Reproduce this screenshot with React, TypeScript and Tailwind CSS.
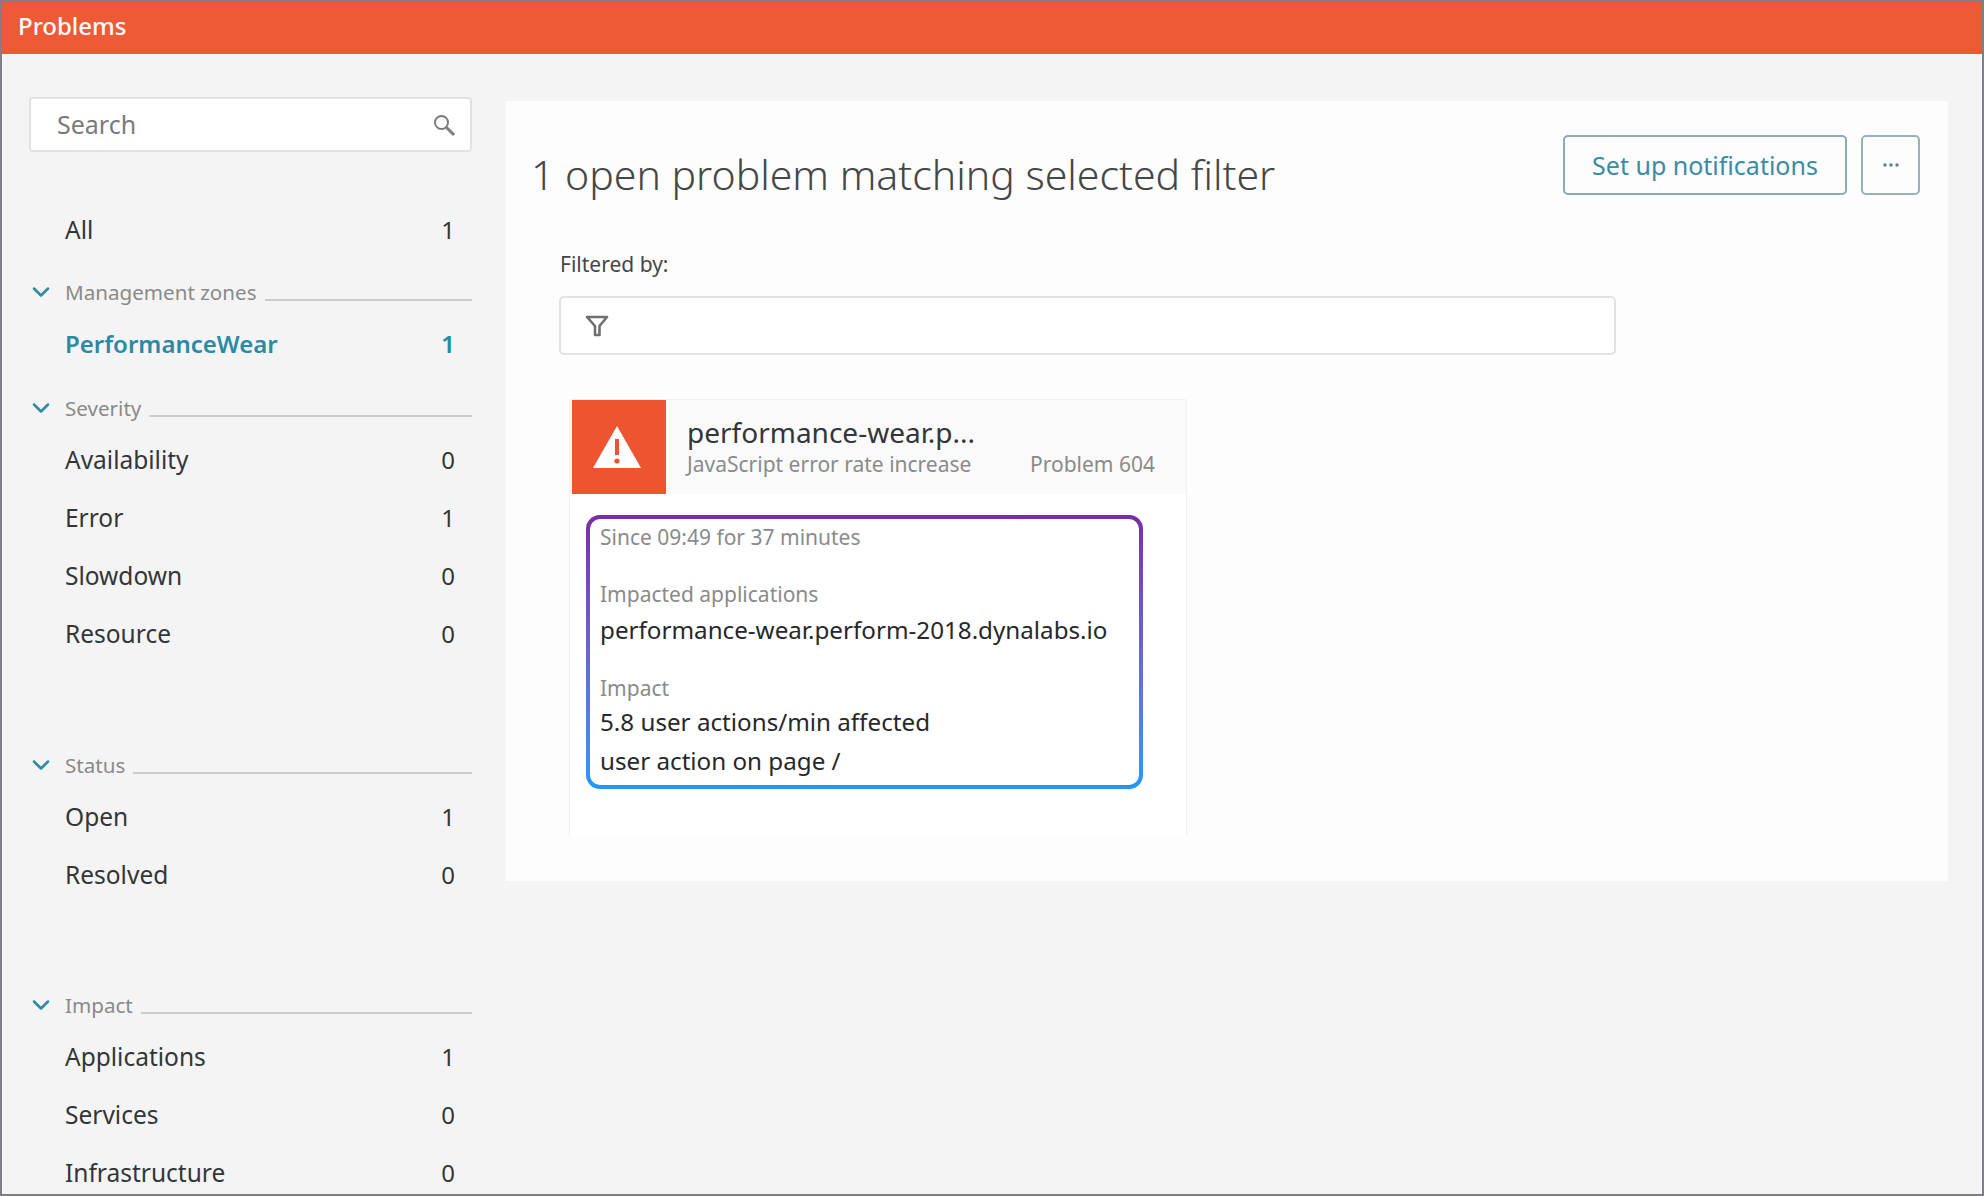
import React from 'react';
import { ChevronDown } from 'lucide-react';

interface FilterSection {
  title: string;
  gap: string;
  rows: { label: string; count: number; active?: boolean }[];
}

const sections: FilterSection[] = [
  {
    title: 'Management zones',
    gap: 'mt-[18px]',
    rows: [{ label: 'PerformanceWear', count: 1, active: true }],
  },
  {
    title: 'Severity',
    gap: 'mt-[20px]',
    rows: [
      { label: 'Availability', count: 0 },
      { label: 'Error', count: 1 },
      { label: 'Slowdown', count: 0 },
      { label: 'Resource', count: 0 },
    ],
  },
  {
    title: 'Status',
    gap: 'mt-[87px]',
    rows: [
      { label: 'Open', count: 1 },
      { label: 'Resolved', count: 0 },
    ],
  },
  {
    title: 'Impact',
    gap: 'mt-[86px]',
    rows: [
      { label: 'Applications', count: 1 },
      { label: 'Services', count: 0 },
      { label: 'Infrastructure', count: 0 },
    ],
  },
];

function Row({ label, count, active }: { label: string; count: number; active?: boolean }) {
  return (
    <div className={`flex h-[58px] items-center justify-between pl-[36px] pr-[17px] ${active ? 'text-[24px] font-semibold text-[#2a8aa5]' : 'text-[24.5px] text-[#333638]'}`}>
      <span>{label}</span>
      <span className="text-[24px]">{count}</span>
    </div>
  );
}

export default function App() {
  return (
    <div className="flex h-[1196px] w-full flex-col overflow-hidden border-x-2 border-y-2 border-[#7d8185] bg-[#f4f4f4] font-['Noto_Sans',sans-serif]">
      {/* Top bar */}
      <div className="flex h-[52px] shrink-0 items-center bg-[#ee5a38] pb-[4px] pl-[16px] text-[24px] font-medium text-white">
        Problems
      </div>

      <div className="flex">
        {/* Filter sidebar */}
        <div className="ml-[27px] w-[443px] shrink-0 pt-[43px]">
          <div className="flex h-[55px] items-center justify-between rounded-[4px] border-2 border-[#e2e2e2] bg-white pl-[26px] pr-[14px] text-[25px] text-[#7b7b7b]">
            <span>Search</span>
            <svg width="24" height="24" viewBox="0 0 24 24" fill="none" stroke="#7b7b7b" strokeWidth="2">
              <circle cx="9.5" cy="9.5" r="6.5" />
              <path d="M14.5 14.5L22 22" strokeWidth="3" />
            </svg>
          </div>

          <div className="mt-[49px]">
            <Row label="All" count={1} />
          </div>

          {sections.map((section) => (
            <div key={section.title} className={section.gap}>
              <div className="flex h-[30px] items-center">
                <ChevronDown className="h-[28px] w-[28px] shrink-0 -translate-x-[2px] text-[#2f8c9e]" strokeWidth={2.2} />
                <span className="ml-[8px] text-[20.6px] text-[#8a8a8a]">{section.title}</span>
                <div className="ml-[8px] mt-[15px] h-[2px] flex-1 bg-[#cbcbcb]" />
              </div>
              <div className="mt-[8px]">
                {section.rows.map((row) => (
                  <Row key={row.label} {...row} />
                ))}
              </div>
            </div>
          ))}
        </div>

        {/* Main panel */}
        <div className="ml-[34px] mt-[47px] h-[780px] w-[1442px] shrink-0 bg-[#fdfdfd] pl-[25px] pr-[28px] pt-[34px]">
          <div className="flex items-start justify-between">
            <h1 className="mt-[9px] text-[41px] leading-[60px] font-light text-[#454646]">
              1 open problem matching selected filter
            </h1>
            <div className="flex gap-[14px]">
              <button className="flex h-[60px] w-[284px] items-center justify-center rounded-[5px] border-2 border-[#8aacb1] pt-[2px] text-[25px] text-[#3a8ca3]">
                Set up notifications
              </button>
              <button className="flex h-[60px] w-[59px] items-center justify-center rounded-[5px] border-2 border-[#9ab2b6] text-[#5f7f88]">
                <svg width="20" height="6" viewBox="0 0 20 6" fill="currentColor">
                  <circle cx="4" cy="3" r="1.7" />
                  <circle cx="10" cy="3" r="1.7" />
                  <circle cx="16" cy="3" r="1.7" />
                </svg>
              </button>
            </div>
          </div>

          <div className="ml-[29px] mt-[45px] text-[21px] leading-[30px] text-[#454646]">Filtered by:</div>

          <div className="ml-[28px] mt-[17px] flex h-[59px] w-[1057px] items-center rounded-[5px] border-2 border-[#e2e2e2] bg-white pl-[24px]">
            <svg width="24" height="24" viewBox="0 0 24 24" fill="none" stroke="#6f6f6f" strokeWidth="2.6">
              <path d="M2 3H22L14.5 12V21H10V12Z" strokeLinejoin="round" />
            </svg>
          </div>

          {/* Problem card */}
          <div className="ml-[38px] mt-[44px] h-[438px] w-[618px] rounded-[3px] border border-b-0 border-[#f1f1f1] bg-white">
            <div className="flex h-[94px] bg-[#fafafa]">
              <div className="ml-[2px] flex h-[94px] w-[94px] shrink-0 items-center justify-center bg-[#ee5430]">
                <svg className="-translate-x-[2px]" width="50" height="44" viewBox="0 0 50 44">
                  <path d="M25 1L49 43H1Z" fill="white" />
                  <rect x="23" y="14" width="4" height="16" fill="#ee5430" />
                  <circle cx="25" cy="36" r="2.6" fill="#ee5430" />
                </svg>
              </div>
              <div className="min-w-0 flex-1 pl-[21px] pr-[31px] pt-[14px]">
                <div className="text-[28px] leading-[36px] text-[#333638]">performance-wear.p...</div>
                <div className="mt-[1px] flex justify-between text-[21px] leading-[26px] text-[#8a8a8a]">
                  <span>JavaScript error rate increase</span>
                  <span>Problem 604</span>
                </div>
              </div>
            </div>

            {/* Highlighted problem summary */}
            <div className="ml-[16px] mt-[21px] h-[274px] w-[557px] rounded-[14px] bg-gradient-to-b from-[#7a2ca6] to-[#1b98f6] p-[4px]">
              <div className="h-full rounded-[10px] bg-white pl-[10px] pt-[4px]">
                <div className="text-[21px] leading-[28px] text-[#8a8a8a]">Since 09:49 for 37 minutes</div>
                <div className="mt-[29px] text-[21px] leading-[28px] text-[#8a8a8a]">Impacted applications</div>
                <div className="mt-[5px] text-[24.2px] leading-[34px] text-[#26282a]">performance-wear.perform-2018.dynalabs.io</div>
                <div className="mt-[27px] text-[21px] leading-[28px] text-[#8a8a8a]">Impact</div>
                <div className="mt-[3px] text-[24.2px] leading-[34px] text-[#26282a]">5.8 user actions/min affected</div>
                <div className="mt-[5px] text-[24.2px] leading-[34px] text-[#26282a]">user action on page /</div>
              </div>
            </div>
          </div>
        </div>
      </div>
    </div>
  );
}
